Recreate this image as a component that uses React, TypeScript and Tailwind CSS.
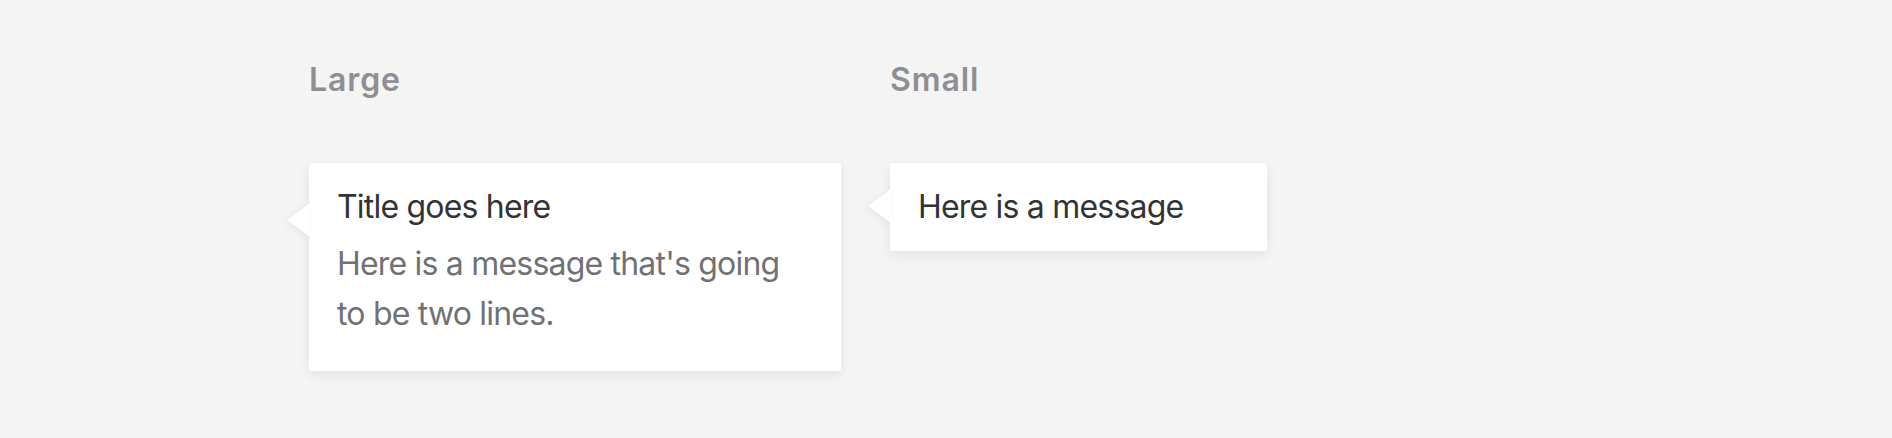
import React from 'react';

function Arrow({ top }: { top: string }) {
  return (
    <svg
      className={`absolute -left-[22px] ${top} [filter:drop-shadow(-2px_2px_3px_rgba(0,0,0,0.06))]`}
      width="23"
      height="34"
      viewBox="0 0 23 34"
    >
      <polygon points="23,0 0,17 23,34" fill="#ffffff" />
    </svg>
  );
}

export default function App() {
  return (
    <div className="min-h-[438px] w-full bg-[#f4f4f4] font-['Inter','Noto_Sans',sans-serif]">
      <div className="flex gap-[49px] pl-[309px] pt-[56px]">
        {/* Large tooltip */}
        <div className="flex w-[532px] flex-col">
          <h2 className="text-[32px] leading-[48px] font-semibold tracking-[0.9px] text-[#8e8e93]">Large</h2>
          <div className="relative mt-[59px] rounded-[2px] bg-white px-[28px] pt-[20px] pb-[32px] shadow-[0_4px_12px_rgba(0,0,0,0.08)]">
            <Arrow top="top-[40px]" />
            <p className="text-[32px] leading-[48px] tracking-[-0.8px] text-[#333335]">Title goes here</p>
            <p className="mt-[8px] max-w-[460px] text-[32px] leading-[50px] tracking-[-0.8px] text-[#717175]">
              Here is a message that's going to be two lines.
            </p>
          </div>
        </div>

        {/* Small tooltip */}
        <div className="flex flex-col">
          <h2 className="text-[32px] leading-[48px] font-semibold tracking-[0.9px] text-[#8e8e93]">Small</h2>
          <div className="relative mt-[59px] w-[377px] rounded-[2px] bg-white px-[28px] py-[20px] shadow-[0_4px_12px_rgba(0,0,0,0.08)]">
            <Arrow top="top-[26px]" />
            <p className="text-[32px] leading-[48px] tracking-[-0.8px] text-[#333335]">Here is a message</p>
          </div>
        </div>
      </div>
    </div>
  );
}
